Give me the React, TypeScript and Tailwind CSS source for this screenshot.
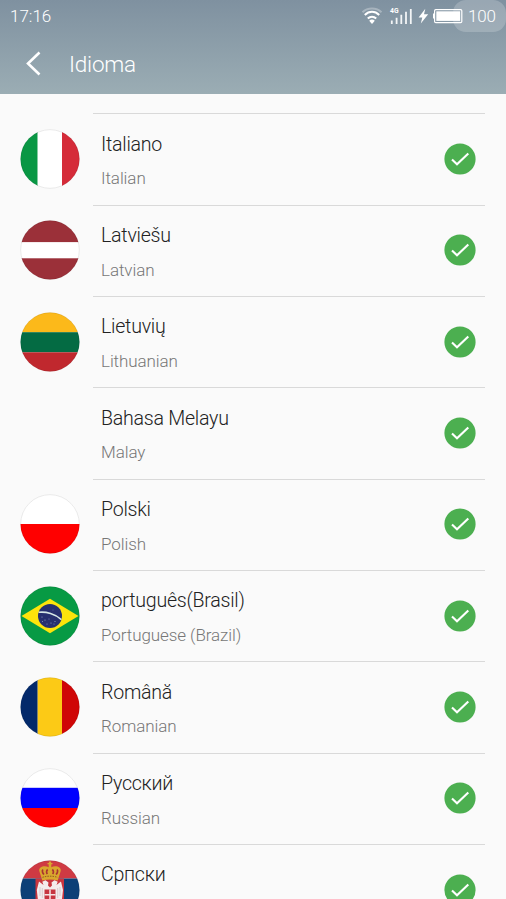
import type { ReactNode } from 'react';

interface Language {
  name: string;
  label?: string;
  flag: ReactNode;
}

interface StripesProps {
  colors: string[];
  // edges of the stripes, from 0 to 60
  stops: number[];
  vertical?: boolean;
}

function Stripes({ colors, stops, vertical }: StripesProps) {
  return (
    <>
      {colors.map((color, i) => {
        const size = stops[i + 1] - stops[i];
        return vertical ? (
          <rect key={i} x={stops[i]} y="0" width={size} height="60" fill={color} />
        ) : (
          <rect key={i} x="0" y={stops[i]} width="60" height={size} fill={color} />
        );
      })}
    </>
  );
}

function Brazil() {
  return (
    <>
      <rect width="60" height="60" fill="#079a44" />
      <path d="M1.5 30 30 12.8 58.5 30 30 47.2Z" fill="#fde40b" />
      <circle cx="30" cy="30" r="12" fill="#26306f" />
      <path d="M18.6 26.3C26 25.3 35.5 28 41.4 33.6" fill="none" stroke="#d6e8e6" strokeWidth="1.6" />
      <g fill="#8e9cc8">
        <circle cx="22" cy="31" r=".6" />
        <circle cx="25" cy="34" r=".6" />
        <circle cx="22.5" cy="35.5" r=".5" />
        <circle cx="29" cy="33" r=".5" />
        <circle cx="31" cy="37" r=".6" />
        <circle cx="27" cy="38" r=".5" />
        <circle cx="35" cy="35.5" r=".6" />
        <circle cx="34" cy="38" r=".5" />
        <circle cx="33" cy="24" r=".4" />
      </g>
    </>
  );
}

function Serbia() {
  return (
    <>
      <Stripes colors={['#cf3a43', '#0d4077', '#ffffff']} stops={[0, 18.5, 41, 60]} />
      {/* shield */}
      <path d="M15.5 18.5H44V39C44 46 38 50 30 53 22 50 15.5 46 15.5 39Z" fill="#c9353e" />
      {/* double-headed eagle */}
      <path
        d="M30 27.5 28 25.5 28.5 22.5 25.5 20.3 22.3 21.8 23.5 25 19 21.5 16.8 30 17.8 39 22 44 26 42 27 47H33L34 42 38 44 42 39 43 30 41 21.5 36.5 25 37.7 21.8 34.5 20.3 31.5 22.5 32 25.5Z"
        fill="#f3eced"
      />
      <path d="M20 27v9M22.3 28v10M40 27v9M37.7 28v10" stroke="#c9b6b9" strokeWidth=".6" />
      <path d="M24.5 29.5H35.5V38C35.5 40 32.5 41.5 30 42.5 27.5 41.5 24.5 40 24.5 38Z" fill="#c73540" />
      <path d="M30 29.5V42M24.5 34.8H35.5" stroke="#f4e3e4" strokeWidth="1.5" />
      {/* crown */}
      <path
        d="M22.3 20.5 19.3 11 C18.3 6.5 25 4.8 28.7 7.3V4.2H27.5V3H28.9V1.6H31.1V3H32.5V4.2H31.3V7.3C35 4.8 41.7 6.5 40.7 11L37.7 20.5C33 19 27 19 22.3 20.5Z"
        fill="#d9a72e"
      />
      <path
        d="M23 9.5C21.5 11 23 13.5 24 14.5M27.7 9.5C26 11 26.5 13 27.4 14M32.3 9.5C34 11 33.5 13 32.6 14M37 9.5C38.5 11 37 13.5 36 14.5"
        fill="none"
        stroke="#a93431"
        strokeWidth="1.7"
      />
      <path d="M22.5 17.3C27 15.8 33 15.8 37.5 17.3" fill="none" stroke="#8b5421" strokeWidth=".9" strokeDasharray="1.5 1" />
    </>
  );
}

const LANGUAGES: Language[] = [
  {
    name: 'Italiano',
    label: 'Italian',
    flag: <Stripes vertical colors={['#099744', '#ffffff', '#d52b39']} stops={[0, 17.7, 42, 60]} />,
  },
  {
    name: 'Latviešu',
    label: 'Latvian',
    flag: <Stripes colors={['#9b3039', '#ffffff', '#9b3039']} stops={[0, 22.3, 38.3, 60]} />,
  },
  {
    name: 'Lietuvių',
    label: 'Lithuanian',
    flag: <Stripes colors={['#fcb91a', '#046b43', '#c0282e']} stops={[0, 20.2, 40.3, 60]} />,
  },
  { name: 'Bahasa Melayu', label: 'Malay', flag: null },
  {
    name: 'Polski',
    label: 'Polish',
    flag: <Stripes colors={['#ffffff', '#ff0000']} stops={[0, 30, 60]} />,
  },
  { name: 'português(Brasil)', label: 'Portuguese (Brazil)', flag: <Brazil /> },
  {
    name: 'Română',
    label: 'Romanian',
    flag: <Stripes vertical colors={['#03296a', '#fcca16', '#cf0606']} stops={[0, 17.7, 42, 60]} />,
  },
  {
    name: 'Русский',
    label: 'Russian',
    flag: <Stripes colors={['#ffffff', '#0000ff', '#ff0000']} stops={[0, 19.8, 40, 60]} />,
  },
  { name: 'Српски', flag: <Serbia /> },
];

function StatusBar() {
  return (
    <div className="flex h-[33px] items-center justify-between pl-[10px]">
      <span className="text-[17px] leading-[33px] font-light text-white">17:16</span>
      <div className="flex h-full items-center">
        <svg className="h-[33px] w-[104px]" viewBox="360 0 104 33" fill="none">
          {/* wifi */}
          <path d="M362.5 12.2C367.5 7.2 376.5 7.2 381.5 12.2" stroke="#fff" strokeOpacity=".3" strokeWidth="2" />
          <path d="M364.8 15C369 10.8 375 10.8 379.2 15" stroke="#fff" strokeWidth="2" />
          <path d="M367.8 18.5C370.2 16 373.8 16 376.2 18.5" stroke="#fff" strokeWidth="2" />
          <path d="M369.2 20.8C371 19.2 373 19.2 374.8 20.8L372 24Z" fill="#fff" />
          {/* signal */}
          <path d="M391.8 20.5V24M396.6 17.8V24M401.3 14.8V24M406 11.8V24M410.8 9V24" stroke="#fff" strokeOpacity=".9" strokeWidth="1.8" />
          <text x="390" y="13.2" fill="#fff" fontSize="6.8" fontWeight="700" fontFamily="Roboto, sans-serif">
            4G
          </text>
          {/* charging bolt */}
          <path d="M425.3 8.8 418.6 17.4H422.3L420.8 23.6 428.2 14.2H424Z" fill="#fff" />
        </svg>
        <div className="relative -ml-[11px] flex h-[33px] w-[53px] items-center">
          <div className="absolute top-0 left-0 h-8 w-[53px] rounded-[13px] bg-white/20" />
          <svg className="absolute top-0 -left-[21px] h-[33px] w-[31px]" viewBox="432 0 31 33">
            <rect x="434.6" y="9.6" width="27.2" height="13" rx="1.2" fill="none" stroke="#fff" strokeWidth="1.2" />
            <rect x="436.3" y="11.3" width="23.8" height="9.6" fill="#fff" />
            <path d="M433 13.5h1v5h-1z" fill="#fff" />
          </svg>
          <span className="relative ml-[15px] text-[17px] font-light tracking-[-0.2px] text-white">100</span>
        </div>
      </div>
    </div>
  );
}

function Header() {
  return (
    <header className="h-[94px] shrink-0 overflow-hidden bg-linear-to-b from-[#7f91a0] to-[#9badb4]">
      <StatusBar />
      <div className="flex h-[61px] items-center pl-[25px]">
        <svg className="h-7 w-4" viewBox="0 0 16 28" fill="none">
          <path d="M14.5 2.5 3 13.5 14.5 24.5" stroke="#fff" strokeWidth="2.6" />
        </svg>
        <h1 className="ml-7 pt-0.5 text-[22.5px] font-light tracking-[-0.2px] text-white">Idioma</h1>
      </div>
    </header>
  );
}

function LanguageRow({ name, label, flag }: Language) {
  return (
    <li className="flex h-[91.33px] shrink-0 pr-[21px] pl-5">
      <div className="flex w-[73px] shrink-0 pt-[15.6px]">
        {flag && (
          <svg className="h-[60px] w-[60px]" viewBox="0 0 60 60">
            <g className="[clip-path:circle(29.5px_at_30px_30px)]">{flag}</g>
            <circle cx="30" cy="30" r="29.3" fill="none" stroke="#000" strokeOpacity=".1" strokeWidth=".8" />
          </svg>
        )}
      </div>
      <div className="flex flex-1 border-t border-[#d9d9d9] pl-2">
        <div className="flex-1 pt-[18.3px]">
          <div className="text-[19.6px] leading-6 font-light tracking-[-0.25px] text-[#222]">{name}</div>
          {label && (
            <div className="mt-[11.6px] text-[17px] leading-5 font-light tracking-[-0.08px] text-[#777]">{label}</div>
          )}
        </div>
        <svg className="mt-[28.6px] mr-[9px] h-8 w-8" viewBox="0 0 32 32" fill="none">
          <circle cx="16" cy="16" r="15.6" fill="#4caf50" />
          <path d="M8 16.5 13 21.3 24.3 10.4" stroke="#fff" strokeWidth="2.1" />
        </svg>
      </div>
    </li>
  );
}

export default function App() {
  return (
    <div className="flex h-[899px] w-[506px] flex-col overflow-hidden bg-[#fafafa] font-[Roboto,'Noto_Sans',sans-serif]">
      <Header />
      <ul className="flex min-h-0 flex-1 flex-col overflow-hidden pt-[19.4px]">
        {LANGUAGES.map((language) => (
          <LanguageRow key={language.name} {...language} />
        ))}
      </ul>
    </div>
  );
}
